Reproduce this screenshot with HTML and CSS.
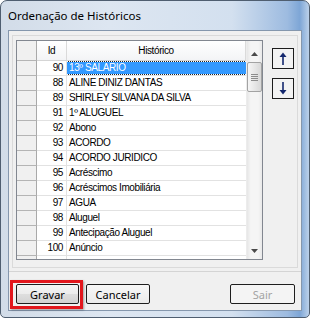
FILE: index.html
```html
<!DOCTYPE html>
<html lang="pt-BR">
<head>
    <meta charset="UTF-8">
    <title>Ordenação de Históricos</title>
    <link rel="stylesheet" href="styles.css">
</head>
<body>
    <div class="window">
        <div class="titlebar">Ordenação de Históricos</div>

        <div class="client">
            <!-- Grid + move buttons -->
            <div class="top">
                <div class="panel">
                    <div class="grid">
                        <div class="grid-body">
                            <div class="row head">
                                <div class="cell ind"></div>
                                <div class="cell id">Id</div>
                                <div class="cell name">Histórico</div>
                            </div>
                            <div class="row selected">
                                <div class="cell ind"></div>
                                <div class="cell id">90</div>
                                <div class="cell name"><span>13º SALARIO</span></div>
                            </div>
                            <div class="row"><div class="cell ind"></div><div class="cell id">88</div><div class="cell name">ALINE DINIZ DANTAS</div></div>
                            <div class="row"><div class="cell ind"></div><div class="cell id">89</div><div class="cell name">SHIRLEY SILVANA DA SILVA</div></div>
                            <div class="row"><div class="cell ind"></div><div class="cell id">91</div><div class="cell name">1º ALUGUEL</div></div>
                            <div class="row"><div class="cell ind"></div><div class="cell id">92</div><div class="cell name">Abono</div></div>
                            <div class="row"><div class="cell ind"></div><div class="cell id">93</div><div class="cell name">ACORDO</div></div>
                            <div class="row"><div class="cell ind"></div><div class="cell id">94</div><div class="cell name">ACORDO JURIDICO</div></div>
                            <div class="row"><div class="cell ind"></div><div class="cell id">95</div><div class="cell name">Acréscimo</div></div>
                            <div class="row"><div class="cell ind"></div><div class="cell id">96</div><div class="cell name">Acréscimos Imobiliária</div></div>
                            <div class="row"><div class="cell ind"></div><div class="cell id">97</div><div class="cell name">AGUA</div></div>
                            <div class="row"><div class="cell ind"></div><div class="cell id">98</div><div class="cell name">Aluguel</div></div>
                            <div class="row"><div class="cell ind"></div><div class="cell id">99</div><div class="cell name">Antecipação Aluguel</div></div>
                            <div class="row"><div class="cell ind"></div><div class="cell id">100</div><div class="cell name">Anúncio</div></div>
                            <div class="row"><div class="cell ind"></div><div class="cell id"></div><div class="cell name"></div></div>
                        </div>

                        <div class="scrollbar">
                            <div class="sb-btn sb-up">
                                <svg width="7" height="4" viewBox="0 0 7 4"><polygon points="0,4 3.5,0 7,4" fill="#4a4a4a"/></svg>
                            </div>
                            <div class="sb-track">
                                <div class="sb-thumb">
                                    <svg width="7" height="7" viewBox="0 0 7 7">
                                        <path d="M0 0.5h7M0 2.5h7M0 4.5h7M0 6.5h7" stroke="#8c8c8c" stroke-width="1"/>
                                    </svg>
                                </div>
                            </div>
                            <div class="sb-btn sb-down">
                                <svg width="7" height="4" viewBox="0 0 7 4"><polygon points="0,0 3.5,4 7,0" fill="#4a4a4a"/></svg>
                            </div>
                        </div>
                    </div>

                    <div class="side">
                        <button class="move" type="button">
                            <svg width="12" height="13" viewBox="0 0 12 13">
                                <path d="M6 3v10" stroke="#14286e" stroke-width="1.6"/>
                                <polygon points="2.5,5 6,0.5 9.5,5" fill="#14286e"/>
                            </svg>
                        </button>
                        <button class="move" type="button">
                            <svg width="12" height="13" viewBox="0 0 12 13">
                                <path d="M6 0v10" stroke="#14286e" stroke-width="1.6"/>
                                <polygon points="2.5,8 6,12.5 9.5,8" fill="#14286e"/>
                            </svg>
                        </button>
                    </div>
                </div>
            </div>

            <!-- Action buttons -->
            <div class="bottom">
                <span class="mark"><button class="btn gravar" type="button">Gravar</button></span>
                <button class="btn cancelar" type="button">Cancelar</button>
                <button class="btn sair" type="button" disabled>Sair</button>
            </div>
        </div>
    </div>
</body>
</html>
```

FILE: styles.css
```css
/* Base Reset */
body, html {
    margin: 0;
    padding: 0;
    background-color: #fff;
}
* {
    box-sizing: border-box;
}

/* Window frame */
.window {
    width: 310px;
    height: 318px;
    border: 1px solid #4f5e70;
    border-radius: 7px 7px 5px 5px;
    padding: 0 7px 6px 7px;
    display: flex;
    flex-direction: column;
    font-family: "Noto Sans", sans-serif;
    background: linear-gradient(to right, #d2dce8 0%, #dde6f1 35%, #d3e0ef 75%, #9dbbe0 93%, #7ea6d6 97%, #bcd1ea 100%);
}

.titlebar {
    height: 29px;
    line-height: 30px;
    font-size: 11.5px;
    color: #000;
    white-space: nowrap;
}

.client {
    flex: 1;
    display: flex;
    flex-direction: column;
    background-color: #f0f0f0;
    border: 1px solid #8597ad;
}

/* Top area */
.top {
    height: 241px;
    padding: 4px 3px 0 3px;
    border-bottom: 1px solid #d4d4d4;
}

.panel {
    height: 233px;
    border: 1px solid #dadada;
    display: flex;
    padding: 4px 2px 0 3px;
}

/* Grid */
.grid {
    width: 247px;
    height: 220px;
    border: 1px solid #828790;
    display: flex;
    background: #fff;
    font-family: "Liberation Sans", Arial, sans-serif;
    font-size: 10px;
    letter-spacing: -0.4px;
    color: #000;
}

.grid-body {
    flex: 1;
    overflow: hidden;
}

.row {
    display: flex;
    height: 15px;
    border-bottom: 1px solid #e2e2e2;
    line-height: 14px;
}

.cell {
    white-space: nowrap;
    overflow: hidden;
}

.cell.ind {
    width: 20px;
    background: #f0f0f0;
    border-right: 1px solid #a9a9a9;
    border-bottom: 1px solid #b4b4b4;
    margin-bottom: -1px;
}

.cell.id {
    width: 30px;
    text-align: right;
    padding-right: 3px;
    border-right: 1px solid #e2e2e2;
}

.cell.name {
    flex: 1;
    padding-left: 2px;
}

.row.head {
    height: 20px;
    line-height: 19px;
    border-bottom: 1px solid #d5d5d5;
    background: linear-gradient(#ffffff, #f3f4f6);
}

.row.head .id,
.row.head .name {
    text-align: center;
    padding: 0;
    border-right: 1px solid #dadada;
}

.row.selected .name {
    padding: 1px 0 1px 0;
}

.row.selected .name span {
    display: block;
    height: 12px;
    line-height: 11px;
    padding-left: 2px;
    background: #3399ff;
    color: #fff;
    outline: 1px dotted #222;
    outline-offset: 0;
}

/* Scrollbar */
.scrollbar {
    width: 16px;
    display: flex;
    flex-direction: column;
    border-left: 1px solid #ececec;
    background: linear-gradient(to right, #e6e6e6, #f5f5f5 25%, #f5f5f5 75%, #e9e9e9);
}

.sb-btn {
    height: 17px;
    display: flex;
    align-items: center;
    justify-content: center;
}

.sb-up {
    height: 21px;
    padding-top: 4px;
}

.sb-track {
    flex: 1;
}

.sb-thumb {
    height: 30px;
    margin: 0 0 0 0;
    border: 1px solid #a3a3a3;
    border-radius: 2px;
    background: linear-gradient(to right, #f6f6f6, #e4e4e4 60%, #d8d8d8);
    display: flex;
    align-items: center;
    justify-content: center;
}

/* Move buttons */
.side {
    margin-left: 9px;
    padding-top: 8px;
    display: flex;
    flex-direction: column;
    gap: 9px;
}

.move {
    width: 22px;
    height: 21px;
    padding: 0;
    border: 1px solid #1c1c1c;
    background: #f3f3f3;
    display: flex;
    align-items: center;
    justify-content: center;
}

/* Bottom buttons */
.bottom {
    flex: 1;
    display: flex;
    align-items: flex-start;
    gap: 7px;
    padding: 12px 6px 0 7px;
}

.btn {
    height: 20px;
    padding: 0;
    font-family: "Noto Sans", sans-serif;
    font-size: 11px;
    color: #000;
    border: 1px solid #1e1e1e;
    border-radius: 2px;
    background: linear-gradient(#f4f4f4 0%, #ececec 50%, #dedede 52%, #d2d2d2 100%);
}

.gravar {
    width: 63px;
}

.cancelar {
    width: 64px;
    background: linear-gradient(#f7f7f7, #ebebeb);
}

.sair {
    width: 65px;
    margin-left: auto;
    color: #a3a3a3;
    background: #f4f4f4;
}

/* Red highlight around Gravar */
.mark {
    position: relative;
    display: flex;
}

.mark::after {
    content: "";
    position: absolute;
    left: -6px;
    top: -4px;
    right: -4px;
    bottom: -5px;
    border: 3px solid #e2161c;
    box-shadow: 1px 1px 2px rgba(0, 0, 0, 0.35);
}
```
